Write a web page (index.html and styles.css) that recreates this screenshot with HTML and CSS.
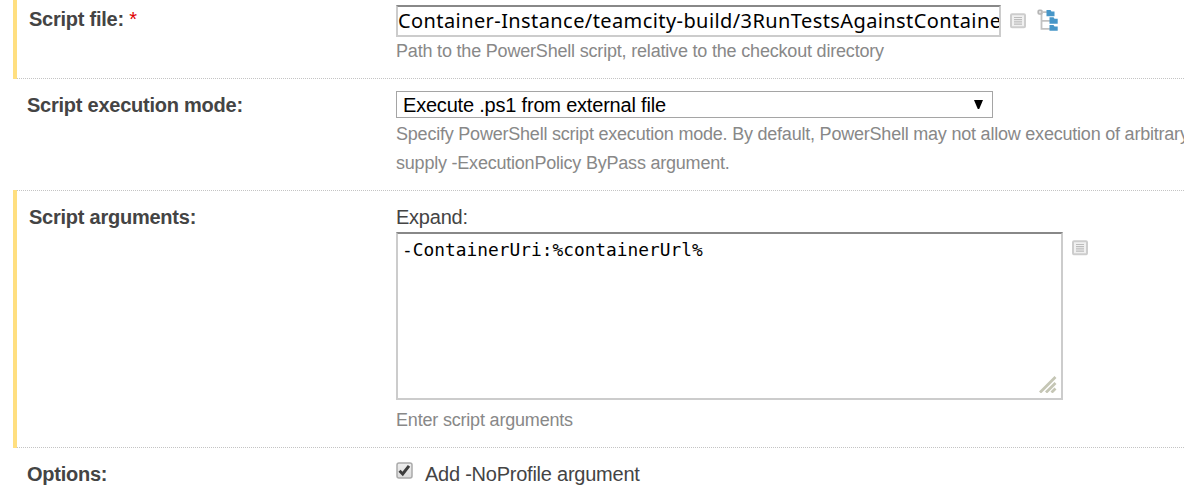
FILE: index.html
```html
<!DOCTYPE html>
<html lang="en">
<head>
<meta charset="utf-8">
<title>Build step settings</title>
<link rel="stylesheet" href="styles.css">
</head>
<body>
<svg class="defs" width="0" height="0">
  <symbol id="list" viewBox="0 0 16 16">
    <rect x="1" y="1.3" width="14" height="13" rx="1" fill="#f0f0f0" stroke="#cdcdcd" stroke-width="2"/>
    <path d="M4 4.5h8M4 6.7h8M4 8.9h8M4 11.1h8" stroke="#bcbcbc" stroke-width="1.2"/>
  </symbol>
</svg>
<main class="form">
  <section class="row row-file changed">
    <div class="label">Script file: <span class="required">*</span></div>
    <div class="field">
      <div class="line">
        <div class="textfield"><span class="path">Container-Instance/teamcity-build/3RunTestsAgainstContaine</span></div>
        <svg class="icon list-icon"><use href="#list"/></svg>
        <svg class="tree-icon" viewBox="0 0 22 22">
          <path d="M4.5 4v15.8H13M4.5 11.8H13M6 3.2h4" fill="none" stroke="#c2c2c2" stroke-width="1.8"/>
          <rect x="1.2" y="1.2" width="3.8" height="3.8" rx="1" fill="#ddd" stroke="#b5b5b5" stroke-width="1.6"/>
          <path d="M9.5 1h4l1 1.5h3v4.7h-8zM12.5 8.2h4l1 1.6h3.2v4.9h-8.2zM12.5 16h4l1 1.6h3.2v4.2h-8.2z" fill="#4796c8"/>
        </svg>
      </div>
      <div class="note note-file">Path to the PowerShell script, relative to the checkout directory</div>
    </div>
  </section>
  <section class="row row-mode">
    <div class="label">Script execution mode:</div>
    <div class="field">
      <div class="select"><span class="option">Execute .ps1 from external file</span><svg class="arrow" viewBox="0 0 9 9"><path d="M0 0h9L5.2 9H3.8z"/></svg></div>
      <div class="note note-mode"><span class="mode-first">Specify PowerShell script execution mode. By default, PowerShell may not allow execution of arbitrary</span><br><span class="mode-second">supply -ExecutionPolicy ByPass argument.</span></div>
    </div>
  </section>
  <section class="row row-args changed">
    <div class="label">Script arguments:</div>
    <div class="field">
      <div class="expand">Expand:</div>
      <div class="line">
        <div class="textarea"><span class="code">-ContainerUri:%containerUrl%</span>
          <svg class="grip" viewBox="0 0 18 17"><path d="M1 16.5 16.5 1M7 16.5 16.5 7M12.5 16.5l4-4" fill="none" stroke="#c5c6b5" stroke-width="2.8"/></svg>
        </div>
        <svg class="icon list-icon"><use href="#list"/></svg>
      </div>
      <div class="note note-args">Enter script arguments</div>
    </div>
  </section>
  <section class="row row-options">
    <div class="label">Options:</div>
    <div class="field check-line">
      <svg class="checkbox" viewBox="0 0 17 17">
        <defs><linearGradient id="face" x2="0" y2="1"><stop stop-color="#eee"/><stop offset="1" stop-color="#dcdcdc"/></linearGradient></defs>
        <rect x="1" y="1" width="15" height="15" rx="2" fill="url(#face)" stroke="#aaa" stroke-width="1.5"/>
        <path d="M3.5 8.8 6.7 12 13 3.8" fill="none" stroke="#3d3d3d" stroke-width="3"/>
      </svg>
      <span class="check-text">Add -NoProfile argument</span>
    </div>
  </section>
</main>
</body>
</html>
```

FILE: styles.css
```css
* { box-sizing: border-box; }
body { margin: 0; background: #fff; color: #444; font-family: "Liberation Sans", Arial, sans-serif; letter-spacing: -0.24px; overflow: hidden; }
.defs { position: absolute; }
.form { height: 493px; padding-left: 13px; overflow: hidden; }
.row { display: flex; border-bottom: 1px dotted #c4c4c4; padding-left: 14px; position: relative; }
.changed { padding-left: 16px; }
.changed::before { content: ""; position: absolute; left: 0; top: 0; bottom: -1px; width: 4px; background: #ffdf80; }
.row-args::before { top: -1px; }
.row-file { height: 79px; }
.row-mode { height: 112px; }
.row-args { height: 257px; }
.row-options { height: 46px; border-bottom: 0; }
.label { width: 369px; flex: none; font-size: 20px; line-height: 24px; font-weight: bold; padding-top: 14px; white-space: nowrap; }
.changed .label { width: 367px; }
.row-file .label { padding-top: 7px; }
.required { color: #e00000; font-weight: normal; }
.field { flex: none; width: 900px; white-space: nowrap; }
.line { display: flex; }
.textfield { width: 605px; height: 32px; margin-top: 5px; border: 2px solid #ccc; border-top-color: #888; overflow: hidden; font: 20px/28px "Noto Sans", Verdana, sans-serif; letter-spacing: 0.41px; color: #000; }
.icon { width: 16px; height: 16px; margin-left: 9px; flex: none; }
.row-file .list-icon { margin-top: 13px; }
.row-args .list-icon { margin-top: 8px; }
.tree-icon { width: 22px; height: 22px; margin: 9px 0 0 11px; }
.note { font-size: 18px; line-height: 29px; color: #888; letter-spacing: -0.19px; }
.note-mode { padding-top: 2px; letter-spacing: -0.215px; }
.select { width: 597px; height: 27px; margin-top: 12px; border: 1px solid #a5a5a5; padding: 1px 9px 0 6px; display: flex; align-items: center; justify-content: space-between; color: #000; font-size: 20px; line-height: 25px; letter-spacing: -0.2px; }
.arrow { width: 9px; height: 9px; margin-top: -1px; }
.expand { font-size: 20px; line-height: 24px; padding-top: 14px; height: 41px; }
.textarea { position: relative; width: 667px; height: 168px; border: 2px solid #ccc; border-top-color: #888; padding: 4px 4px; color: #000; font: 17.85px/24px "DejaVu Sans Mono", monospace; letter-spacing: 0; }
.grip { position: absolute; right: 4px; bottom: 5px; width: 18px; height: 17px; }
.note-args { padding-top: 6px; }
.check-line { display: flex; font-size: 20px; line-height: 24px; padding-top: 14px; }
.checkbox { width: 17px; height: 17px; }
.check-text { margin-left: 12px; }
```
